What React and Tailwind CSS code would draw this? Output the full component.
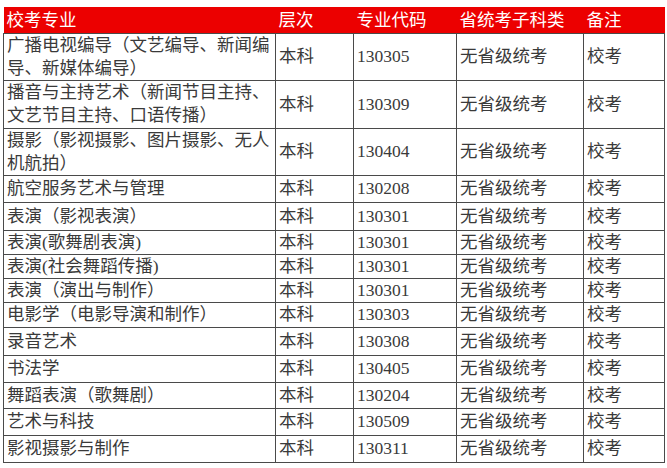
const rows = [
  { name: ['广播电视编导（文艺编导、新闻编', '导、新媒体编导）'], code: '130305', h: 'h-[47px]' },
  { name: ['播音与主持艺术（新闻节目主持、', '文艺节目主持、口语传播）'], code: '130309', h: 'h-[48px]' },
  { name: ['摄影（影视摄影、图片摄影、无人', '机航拍）'], code: '130404', h: 'h-[47px]' },
  { name: ['航空服务艺术与管理'], code: '130208', h: 'h-[27px]' },
  { name: ['表演（影视表演）'], code: '130301', h: 'h-[28px]' },
  { name: ['表演(歌舞剧表演)'], code: '130301', h: 'h-[24px]' },
  { name: ['表演(社会舞蹈传播)'], code: '130301', h: 'h-[24px]' },
  { name: ['表演（演出与制作）'], code: '130301', h: 'h-[24px]' },
  { name: ['电影学（电影导演和制作）'], code: '130303', h: 'h-[25px]' },
  { name: ['录音艺术'], code: '130308', h: 'h-[28px]' },
  { name: ['书法学'], code: '130405', h: 'h-[27px]' },
  { name: ['舞蹈表演（歌舞剧）'], code: '130204', h: 'h-[26px]' },
  { name: ['艺术与科技'], code: '130509', h: 'h-[27px]' },
  { name: ['影视摄影与制作'], code: '130311', h: 'h-[27px]' },
];

const cell = 'border border-[#4a4a4a] px-[3px] align-middle whitespace-nowrap';

export default function App() {
  return (
    <div className="min-h-[468px] w-[667px] bg-white pl-[3px] pt-[7px] font-['Liberation_Serif','Noto_Sans_CJK_SC',serif] text-[17.5px] text-[#3a3a3a]">
      <table className="w-[661px] table-fixed border-collapse">
        <colgroup>
          <col className="w-[272px]" />
          <col className="w-[78px]" />
          <col className="w-[103px]" />
          <col className="w-[127px]" />
          <col className="w-[81px]" />
        </colgroup>
        <thead>
          <tr className="h-[26px] bg-[#ec0000] text-white leading-[22px]">
            <th className="px-[3px] text-left font-normal">校考专业</th>
            <th className="px-[3px] text-left font-normal">层次</th>
            <th className="px-[3px] text-left font-normal">专业代码</th>
            <th className="px-[3px] text-left font-normal">省统考子科类</th>
            <th className="px-[3px] text-left font-normal">备注</th>
          </tr>
        </thead>
        <tbody className="leading-[23px]">
          {rows.map((r, i) => (
            <tr key={i} className={r.h}>
              <td className={cell}>
                {r.name.map((line, j) => (
                  <div key={j}>{line}</div>
                ))}
              </td>
              <td className={cell}>本科</td>
              <td className={cell}>{r.code}</td>
              <td className={cell}>无省级统考</td>
              <td className={cell}>校考</td>
            </tr>
          ))}
        </tbody>
      </table>
    </div>
  );
}
